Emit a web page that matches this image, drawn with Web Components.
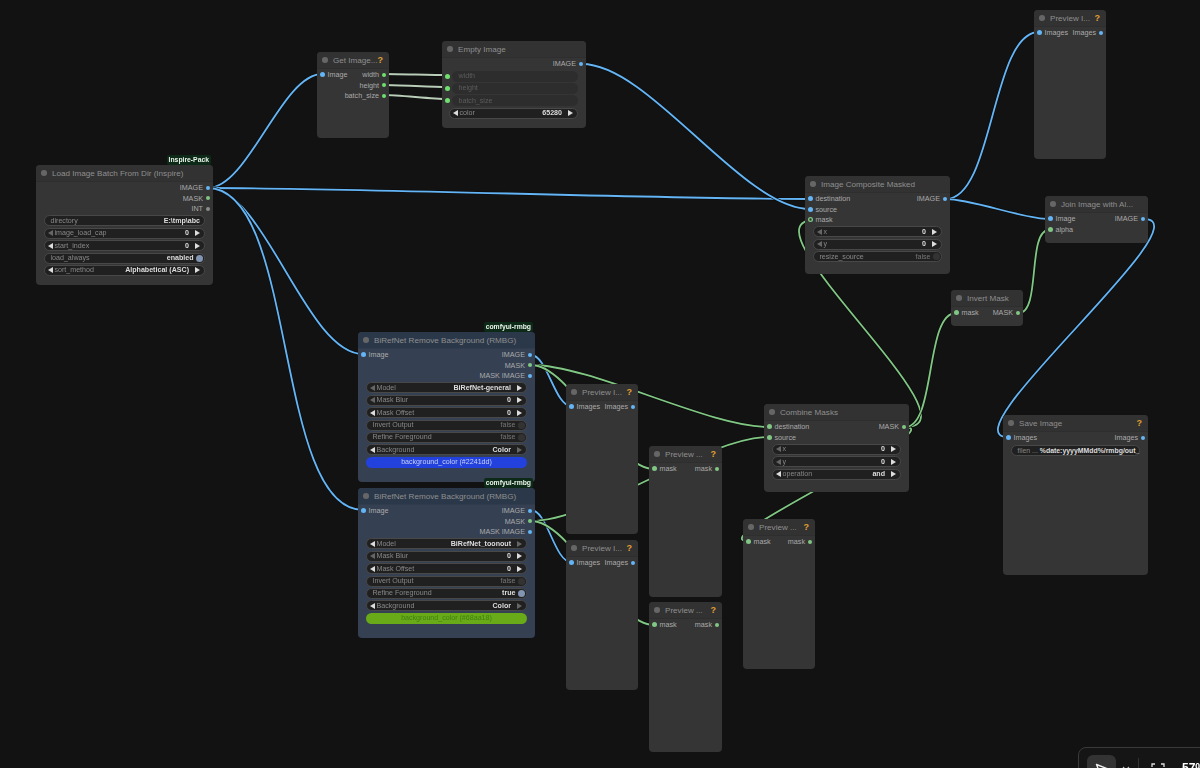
<!DOCTYPE html>
<html>
<head>
<meta charset="utf-8">
<title>Node graph</title>
<style>
  html, body { margin: 0; height: 100%; overflow: hidden; background: #121213; }
  body { font-family: "Liberation Sans", Arial, sans-serif; }
</style>
</head>
<body>
<graph-canvas>
  <graph-wires></graph-wires>

  <graph-node x="36" y="165" w="177" h="120" label="Load Image Batch From Dir (Inspire)" badge="Inspire-Pack">
    <slot-row right="IMAGE" rtype="image"></slot-row>
    <slot-row right="MASK" rtype="mask"></slot-row>
    <slot-row right="INT" rtype="int"></slot-row>
    <node-widget kind="text" label="directory" value="E:\tmp\abc"></node-widget>
    <node-widget label="image_load_cap" value="0" lower="dim"></node-widget>
    <node-widget label="start_index" value="0"></node-widget>
    <node-widget kind="toggle" label="load_always" value="enabled" on></node-widget>
    <node-widget label="sort_method" value="Alphabetical (ASC)"></node-widget>
  </graph-node>

  <graph-node x="317" y="52" w="72" h="86" label="Get Image..." help>
    <slot-row left="Image" ltype="image" right="width" rtype="num"></slot-row>
    <slot-row right="height" rtype="num"></slot-row>
    <slot-row right="batch_size" rtype="num"></slot-row>
  </graph-node>

  <graph-node x="442" y="41" w="144" h="87" label="Empty Image">
    <slot-row right="IMAGE" rtype="image"></slot-row>
    <node-widget kind="ghost" label="width"></node-widget>
    <node-widget kind="ghost" label="height"></node-widget>
    <node-widget kind="ghost" label="batch_size"></node-widget>
    <node-widget label="color" value="65280" style="margin-left:7px"></node-widget>
  </graph-node>

  <graph-node x="1034" y="10" w="72" h="149" label="Preview I..." help>
    <slot-row left="Images" ltype="image" right="Images" rtype="image"></slot-row>
  </graph-node>

  <graph-node x="805" y="176" w="145" h="98" label="Image Composite Masked">
    <slot-row left="destination" ltype="image" right="IMAGE" rtype="image"></slot-row>
    <slot-row left="source" ltype="image"></slot-row>
    <slot-row left="mask" ltype="ring"></slot-row>
    <node-widget label="x" value="0" lower="dim"></node-widget>
    <node-widget label="y" value="0" lower="dim"></node-widget>
    <node-widget kind="toggle" label="resize_source" value="false"></node-widget>
  </graph-node>

  <graph-node x="1045" y="196" w="103" h="47" label="Join Image with Al...">
    <slot-row left="Image" ltype="image" right="IMAGE" rtype="image"></slot-row>
    <slot-row left="alpha" ltype="mask"></slot-row>
  </graph-node>

  <graph-node x="951" y="290" w="72" h="36" label="Invert Mask">
    <slot-row left="mask" ltype="mask" right="MASK" rtype="mask"></slot-row>
  </graph-node>

  <graph-node x="1003" y="415" w="145" h="160" label="Save Image" help>
    <slot-row left="Images" ltype="image" right="Images" rtype="image"></slot-row>
    <node-widget kind="text" label="filen ..." value="%date:yyyyMMdd%/rmbg/out_" style="font-size:6.9px"></node-widget>
  </graph-node>

  <graph-node x="358" y="332" w="177" h="150" label="BiRefNet Remove Background (RMBG)" badge="comfyui-rmbg" tint>
    <slot-row left="Image" ltype="image" right="IMAGE" rtype="image"></slot-row>
    <slot-row right="MASK" rtype="mask"></slot-row>
    <slot-row right="MASK IMAGE" rtype="image"></slot-row>
    <node-widget label="Model" value="BiRefNet-general" lower="dim"></node-widget>
    <node-widget label="Mask Blur" value="0" lower="dim"></node-widget>
    <node-widget label="Mask Offset" value="0"></node-widget>
    <node-widget kind="toggle" label="Invert Output" value="false"></node-widget>
    <node-widget kind="toggle" label="Refine Foreground" value="false"></node-widget>
    <node-widget label="Background" value="Color" upper="dim"></node-widget>
    <node-widget kind="button" label="background_color (#2241dd)" style="--fill:#2241dd;--ink:#c9d2f5"></node-widget>
  </graph-node>

  <graph-node x="358" y="488" w="177" h="150" label="BiRefNet Remove Background (RMBG)" badge="comfyui-rmbg" tint>
    <slot-row left="Image" ltype="image" right="IMAGE" rtype="image"></slot-row>
    <slot-row right="MASK" rtype="mask"></slot-row>
    <slot-row right="MASK IMAGE" rtype="image"></slot-row>
    <node-widget label="Model" value="BiRefNet_toonout" upper="dim"></node-widget>
    <node-widget label="Mask Blur" value="0" lower="dim"></node-widget>
    <node-widget label="Mask Offset" value="0"></node-widget>
    <node-widget kind="toggle" label="Invert Output" value="false"></node-widget>
    <node-widget kind="toggle" label="Refine Foreground" value="true" on></node-widget>
    <node-widget label="Background" value="Color" upper="dim"></node-widget>
    <node-widget kind="button" label="background_color (#68aa18)" style="--fill:#68aa18;--ink:#3f7f12"></node-widget>
  </graph-node>

  <graph-node x="566" y="384" w="72" h="150" label="Preview I..." help>
    <slot-row left="Images" ltype="image" right="Images" rtype="image"></slot-row>
  </graph-node>
  <graph-node x="566" y="540" w="72" h="150" label="Preview I..." help>
    <slot-row left="Images" ltype="image" right="Images" rtype="image"></slot-row>
  </graph-node>
  <graph-node x="649" y="446" w="73" h="151" label="Preview ..." help>
    <slot-row left="mask" ltype="mask" right="mask" rtype="mask"></slot-row>
  </graph-node>
  <graph-node x="649" y="602" w="73" h="150" label="Preview ..." help>
    <slot-row left="mask" ltype="mask" right="mask" rtype="mask"></slot-row>
  </graph-node>
  <graph-node x="743" y="519" w="72" h="150" label="Preview ..." help>
    <slot-row left="mask" ltype="mask" right="mask" rtype="mask"></slot-row>
  </graph-node>

  <graph-node x="764" y="404" w="145" h="88" label="Combine Masks">
    <slot-row left="destination" ltype="mask" right="MASK" rtype="mask"></slot-row>
    <slot-row left="source" ltype="mask"></slot-row>
    <node-widget label="x" value="0" lower="dim"></node-widget>
    <node-widget label="y" value="0" lower="dim"></node-widget>
    <node-widget label="operation" value="and"></node-widget>
  </graph-node>

  <canvas-toolbar></canvas-toolbar>
</graph-canvas>

<script>
  /**
   * The free canvas that holds the nodes and the wires.
   */
  class GraphCanvas extends HTMLElement {
    constructor() {
      super();
      this.attachShadow({ mode: "open" });
      this.shadowRoot.innerHTML = `
        <style>
          :host {
            display: block;
            position: relative;
            width: 1200px;
            height: 768px;
            overflow: hidden;
            filter: blur(0.3px);
          }
        </style>
        <slot></slot>
      `;
    }
  }

  /**
   * The links between the slots, drawn under the nodes.
   */
  class GraphWires extends HTMLElement {
    constructor() {
      super();
      this.attachShadow({ mode: "open" });
    }

    connectedCallback() {
      const blue = "#64b5f6";
      const green = "#81c784";
      const pale = "#b9cdb9";
      // from x, from y, to x, to y, colour, optional handle length
      const links = [
        [208, 188, 322, 74, blue],
        [208, 188, 810, 199, blue],
        [208, 188, 363, 354, blue],
        [208, 188, 363, 510, blue],
        [582, 64, 810, 209, blue],
        [384, 74, 447, 75, pale],
        [384, 85, 447, 87, pale],
        [384, 95, 447, 99, pale],
        [946, 199, 1039, 32, blue],
        [946, 199, 1049, 219, blue],
        [1144, 219, 1008, 437, blue],
        [531, 355, 571, 406, blue],
        [531, 510, 571, 562, blue],
        [531, 365, 769, 427, green],
        [531, 365, 654, 469, green],
        [531, 521, 769, 437, green],
        [531, 521, 654, 625, green],
        [905, 427, 815, 220, green, 80],
        [905, 427, 748, 541, green],
        [905, 427, 956, 313, green],
        [1019, 313, 1049, 230, green],
      ];

      const paths = links.map(([x1, y1, x2, y2, colour, handle]) => {
        // Same spline as the editor: handles at a quarter of the distance.
        const k = handle || Math.hypot(x2 - x1, y2 - y1) * 0.25;
        const d = `M${x1} ${y1}C${x1 + k} ${y1} ${x2 - k} ${y2} ${x2} ${y2}`;
        return `<path d="${d}" stroke="#0b0b0b" stroke-width="3"/><path d="${d}" stroke="${colour}" stroke-width="1.8"/>`;
      });

      this.shadowRoot.innerHTML = `
        <style>
          :host { position: absolute; inset: 0; display: block; }
          svg { display: block; }
        </style>
        <svg width="1200" height="768" fill="none">${paths.join("")}</svg>
      `;
    }
  }

  /**
   * A node box with its title bar. Rows and widgets come in through the slot.
   */
  class GraphNode extends HTMLElement {
    constructor() {
      super();
      this.attachShadow({ mode: "open" });
    }

    connectedCallback() {
      const label = this.getAttribute("label");
      const badge = this.getAttribute("badge");
      const tinted = this.hasAttribute("tint");

      this.style.left = this.getAttribute("x") + "px";
      this.style.top = this.getAttribute("y") + "px";
      this.style.width = this.getAttribute("w") + "px";
      this.style.height = this.getAttribute("h") + "px";

      this.shadowRoot.innerHTML = `
        <style>
          :host {
            position: absolute;
            display: flex;
            flex-direction: column;
            box-sizing: border-box;
            border-radius: 4px;
            background: ${tinted ? "#354153" : "#353535"};
            color: #a8a8a8;
          }
          .title {
            display: flex;
            align-items: center;
            flex: none;
            height: 16px;
            padding: 0 6px 0 5px;
            border-radius: 4px 4px 0 0;
            background: ${tinted ? "#2b3849" : "#323232"};
            box-shadow: 0 1px 0 ${tinted ? "#303c4d" : "#2e2e2e"};
            font-size: 8.1px;
            white-space: nowrap;
            color: #8f8f8f;
          }
          .dot { flex: none; width: 5.6px; height: 5.6px; margin-right: 5.4px; border-radius: 50%; background: #666; }
          .name { flex: 1; }
          .help { font-weight: 700; font-size: 9px; color: #e0a030; }
          .body { display: flex; flex-direction: column; padding-top: 1.8px; }
          .badge {
            position: absolute;
            right: 2px;
            top: -10px;
            padding: 1px 2px;
            border-radius: 2px;
            background: #0d2a18;
            color: #e8f4e8;
            font-size: 6.8px;
            font-weight: 700;
            line-height: 8px;
          }
        </style>
        ${badge ? `<div class="badge">${badge}</div>` : ""}
        <div class="title">
          <span class="dot"></span>
          <span class="name">${label}</span>
          ${this.hasAttribute("help") ? '<span class="help">?</span>' : ""}
        </div>
        <div class="body"><slot></slot></div>
      `;
    }
  }

  // Slot dot colours per data type.
  const SLOT_COLOURS = {
    image: "#64b5f6",
    mask: "#81c784",
    int: "#8a8f8a",
    num: "#6fe06f",
  };

  /**
   * One line of input and output slots.
   */
  class SlotRow extends HTMLElement {
    constructor() {
      super();
      this.attachShadow({ mode: "open" });
    }

    dot(type) {
      if (type === "ring") {
        return '<i style="background:#2c3a2c;box-shadow:inset 0 0 0 1.3px #81c784"></i>';
      }
      return `<i style="background:${SLOT_COLOURS[type]}"></i>`;
    }

    connectedCallback() {
      const left = this.getAttribute("left");
      const right = this.getAttribute("right");

      this.shadowRoot.innerHTML = `
        <style>
          :host {
            display: flex;
            justify-content: space-between;
            align-items: center;
            height: 10.4px;
            padding: 0 3px;
            font-size: 7.2px;
            white-space: nowrap;
            color: #aaa;
          }
          div { display: flex; align-items: center; gap: 3px; }
          i { display: block; width: 4px; height: 4px; border-radius: 50%; }
          .in i { width: 5px; height: 5px; margin-left: -0.5px; }
        </style>
        <div class="in">${left ? this.dot(this.getAttribute("ltype")) + `<span>${left}</span>` : ""}</div>
        <div>${right ? `<span>${right}</span>` + this.dot(this.getAttribute("rtype")) : ""}</div>
      `;
    }
  }

  /**
   * A pill widget: number/combo (default), text, toggle, button or ghost.
   */
  class NodeWidget extends HTMLElement {
    constructor() {
      super();
      this.attachShadow({ mode: "open" });
    }

    connectedCallback() {
      const kind = this.getAttribute("kind") || "combo";
      const label = this.getAttribute("label");
      const value = this.getAttribute("value") || "";
      const lower = this.getAttribute("lower") === "dim" ? "dim" : "";
      const upper = this.getAttribute("upper") === "dim" ? "dim" : "";
      let inner = "";

      if (kind === "combo") {
        inner = `<b class="arrow left ${lower}"></b><span class="label">${label}</span><span class="value">${value}</span><b class="arrow right ${upper}"></b>`;
      } else if (kind === "text") {
        inner = `<span class="label pad">${label}</span><span class="value">${value}</span>`;
      } else if (kind === "toggle") {
        const on = this.hasAttribute("on");
        inner = `<span class="label pad">${label}</span><span class="value ${on ? "" : "off"}">${value}</span><i class="knob ${on ? "on" : ""}"></i>`;
      } else if (kind === "button") {
        inner = `<span class="fill">${label}</span>`;
      } else {
        inner = `<span class="label pad">${label}</span><em></em>`;
      }

      this.shadowRoot.innerHTML = `
        <style>
          :host {
            display: block;
            position: relative;
            flex: none;
            height: 11px;
            margin: 1.4px 8px 0;
            font-size: 7.1px;
          }
          :host([kind="ghost"]) { margin-left: 10px; }
          .pill {
            display: flex;
            align-items: center;
            box-sizing: border-box;
            height: 100%;
            padding: 0 4px 0 2.5px;
            gap: 2px;
            border: 1px solid #484848;
            border-radius: 6px;
            background: #202020;
            white-space: nowrap;
            color: #888;
          }
          .ghost { border-color: transparent; background: #2d2d2d; color: #5c5c5c; }
          .button { justify-content: center; padding: 0; border: 0; background: var(--fill); color: var(--ink); }
          .label { flex: 1 0 auto; }
          .pad { padding-left: 3px; }
          .value { margin-left: auto; color: #ddd; font-weight: 700; }
          .off { color: #777; font-weight: 400; }
          .arrow { flex: none; width: 0; height: 0; border: 3px solid transparent; }
          .left { border-left: 0; border-right: 5px solid #ddd; }
          .right { margin-left: 4px; border-right: 0; border-left: 5px solid #ddd; }
          .left.dim { border-right-color: #666; }
          .right.dim { border-left-color: #666; }
          .knob { flex: none; width: 7px; height: 7px; margin-right: -2.5px; border-radius: 50%; background: #333; }
          .on { background: #8296b4; }
          em {
            position: absolute;
            left: -7.5px;
            top: 3px;
            width: 5px;
            height: 5px;
            border-radius: 50%;
            background: #6fe06f;
          }
        </style>
        <div class="pill ${kind}">${inner}</div>
      `;
    }
  }

  /**
   * The floating tool bar in the corner; the page cuts most of it off.
   */
  class CanvasToolbar extends HTMLElement {
    constructor() {
      super();
      this.attachShadow({ mode: "open" });
      this.shadowRoot.innerHTML = `
        <style>
          :host {
            position: absolute;
            left: 1078px;
            top: 747px;
            display: flex;
            align-items: flex-start;
            box-sizing: border-box;
            width: 160px;
            height: 60px;
            padding: 7px 8px;
            border: 1px solid #3a3a3a;
            border-radius: 8px;
            background: #151515;
            color: #fff;
          }
          .active {
            display: flex;
            justify-content: center;
            width: 29px;
            height: 32px;
            padding-top: 8px;
            box-sizing: border-box;
            border-radius: 6px;
            background: #333;
          }
          .chevron { margin: 11px 0 0 6px; }
          .rule { width: 1px; height: 26px; margin: 3px 0 0 8px; background: #333; }
          .fit { margin: 8px 0 0 12px; }
          .zoom { margin: 6px 0 0 17px; font-size: 12px; font-weight: 700; }
          svg { display: block; }
        </style>
        <div class="active">
          <svg width="14" height="14" viewBox="0 0 14 14" fill="none" stroke="#eee" stroke-width="1.4" stroke-linejoin="round"><path d="M1.5 1.5 13 6 7.5 7.5 6 13Z"/></svg>
        </div>
        <svg class="chevron" width="8" height="6" viewBox="0 0 8 6" fill="none" stroke="#bbb" stroke-width="1.2"><path d="M1 1l3 3 3-3"/></svg>
        <div class="rule"></div>
        <svg class="fit" width="14" height="14" viewBox="0 0 14 14" fill="none" stroke="#ddd" stroke-width="1.3"><path d="M1 4V1h3M10 1h3v3M13 10v3h-3M4 13H1v-3"/><circle cx="7" cy="7" r="1.4"/></svg>
        <span class="zoom">57%</span>
      `;
    }
  }

  customElements.define("graph-canvas", GraphCanvas);
  customElements.define("graph-wires", GraphWires);
  customElements.define("graph-node", GraphNode);
  customElements.define("slot-row", SlotRow);
  customElements.define("node-widget", NodeWidget);
  customElements.define("canvas-toolbar", CanvasToolbar);
</script>
</body>
</html>
